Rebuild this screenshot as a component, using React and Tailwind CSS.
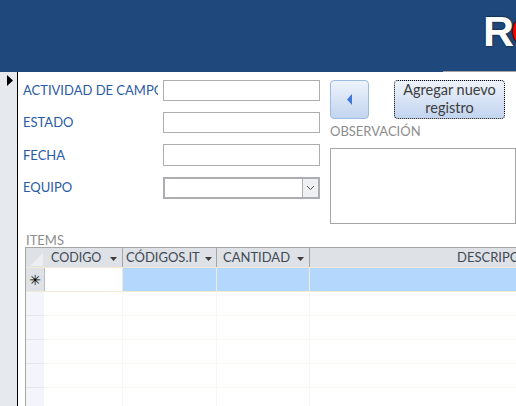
import React from 'react';

const FIELDS = [
  { label: 'ACTIVIDAD DE CAMPO', h: 'h-[21px]', mb: 'mb-[11px]', lh: 'leading-[21px]' },
  { label: 'ESTADO', h: 'h-[21px]', mb: 'mb-[11px]', lh: 'leading-[21px]' },
  { label: 'FECHA', h: 'h-[22px]', mb: 'mb-[11px]', lh: 'leading-[23px]' },
];

const COLUMNS = [
  { label: 'CODIGO', w: 'w-[79px]', pl: 'pl-[7px]', arrow: 'right-[5px]', text: 'text-[12.5px]' },
  { label: 'CÓDIGOS.IT', w: 'w-[94px]', pl: 'pl-[3px]', arrow: 'right-[4px]', text: 'text-[13px]' },
  { label: 'CANTIDAD', w: 'w-[93px]', pl: 'pl-[6px]', arrow: 'right-[5px]', text: 'text-[13px]' },
];

const Arrow = ({ className }) => (
  <svg width="7" height="4" viewBox="0 0 7 4" className={`absolute top-[9px] ${className}`}>
    <path d="M0 0h7L3.5 4z" fill="#3c3c3c" />
  </svg>
);

function Grid() {
  return (
    <div className="ml-[7px] w-[491px] border-t border-l border-[#a5a5a5]">
      {/* header */}
      <div className="flex h-[20px] bg-[#dee1e5] border-b border-[#f0ebd8]">
        <div className="w-[18px] shrink-0 flex items-end">
          <svg width="13" height="13" viewBox="0 0 13 13" className="ml-[4px] mb-[1px]">
            <path d="M13 0v13H0z" fill="#eceef1" />
          </svg>
        </div>
        {COLUMNS.map((c) => (
          <div key={c.label} className={`${c.w} shrink-0 relative border-r border-[#a5a5a5] ${c.pl} ${c.text} leading-[19px] text-[#3f4a57] whitespace-nowrap`}>
            {c.label}
            <Arrow className={c.arrow} />
          </div>
        ))}
        <div className="flex-1 min-w-0 overflow-hidden pl-[147px] text-[13px] leading-[19px] text-[#3f4a57] whitespace-nowrap">DESCRIPCIÓN</div>
      </div>
      {/* new record row */}
      <div className="flex h-[24px] border-b border-[#f0ebd8]">
        <div className="w-[18px] shrink-0 bg-[#dee1e5] flex items-center justify-center">
          <span className="text-[14px] leading-none text-black font-['DejaVu_Sans',sans-serif]">✳</span>
        </div>
        <div className="w-[79px] shrink-0 bg-white border-r border-[#f0ebd8] border-l border-l-[#b9bdc3]" />
        <div className="w-[94px] shrink-0 bg-[#b3d7fd] border-r border-[#f0ebd8]" />
        <div className="w-[93px] shrink-0 bg-[#b3d7fd] border-r border-[#f0ebd8]" />
        <div className="flex-1 bg-[#b3d7fd]" />
      </div>
      {/* empty rows */}
      {[0, 1, 2, 3, 4].map((i) => (
        <div key={i} className="flex h-[24px] border-b border-[#f7f6f0]">
          <div className="w-[18px] shrink-0 bg-[#f3f5fb] border-b border-[#e6e8ee] -mb-px" />
          <div className="w-[79px] shrink-0 border-r border-[#f7f6f0]" />
          <div className="w-[94px] shrink-0 border-r border-[#f7f6f0]" />
          <div className="w-[93px] shrink-0 border-r border-[#f7f6f0]" />
          <div className="flex-1" />
        </div>
      ))}
    </div>
  );
}

export default function App() {
  return (
    <div className="w-[516px] h-[406px] overflow-hidden bg-white font-['Lato',sans-serif] flex flex-col">
      {/* banner */}
      <div className="relative h-[72px] shrink-0 bg-[#1f497d] overflow-hidden">
        <div className="absolute left-[483px] top-[8px] whitespace-nowrap text-[43px] leading-[46px] font-black tracking-[-3px] font-['Liberation_Sans',sans-serif] text-white [text-shadow:0_0_2px_#000]">
          R<span className="text-[#ff0000]">O</span>
        </div>
        <div className="absolute right-0 bottom-0 w-[73px] h-px bg-[#a5a5a5]" />
      </div>

      <div className="flex flex-1 min-h-0">
        {/* record selector */}
        <div className="w-[18px] shrink-0 bg-[#e6e9ee] border-r border-black">
          <svg width="8" height="11" viewBox="0 0 8 11" className="ml-[6px] mt-[3px]">
            <path d="M1 0l6 5.5L1 11z" fill="#000" />
          </svg>
        </div>

        <div className="flex-1 min-w-0">
          <div className="flex h-[160px] pt-[8px]">
            {/* labels and fields */}
            <div className="w-[302px] shrink-0 pl-[5px]">
              {FIELDS.map((f) => (
                <div key={f.label} className={`flex ${f.mb}`}>
                  <div className={`w-[135px] shrink-0 overflow-hidden whitespace-nowrap text-[13px] text-[#2a5ba5] ${f.lh} ${f.h}`}>{f.label}</div>
                  <div className={`ml-[5px] w-[157px] border border-[#adadb2] bg-white ${f.h}`} />
                </div>
              ))}
              <div className="flex">
                <div className="w-[135px] shrink-0 text-[13px] leading-[20px] text-[#2a5ba5]">EQUIPO</div>
                <div className="ml-[5px] w-[157px] h-[22px] border-2 border-[#adadb2] bg-white flex justify-end">
                  <div className="w-[16px] bg-[#eef0f2] border-l border-[#adadb2] flex items-center justify-center">
                    <svg width="9" height="6" viewBox="0 0 9 6"><path d="M1 1l3.5 3.5L8 1" fill="none" stroke="#555" /></svg>
                  </div>
                </div>
              </div>
            </div>

            {/* buttons and notes */}
            <div className="flex-1 min-w-0 ml-[10px]">
              <div className="flex">
                <div className="w-[39px] h-[39px] rounded-[4px] border border-[#9cbbe3] bg-gradient-to-b from-[#eef3fb] to-[#c2d4ef] flex items-center justify-center">
                  <svg width="7" height="13" viewBox="0 0 7 13"><path d="M6 1v11L1 6.5z" fill="#3f78d6" /></svg>
                </div>
                <div className="ml-[25px] w-[111px] h-[39px] rounded-[4px] border border-dotted border-black bg-gradient-to-b from-[#eef3fb] to-[#c2d4ef] text-center text-[14.5px] leading-[18px] text-[#3b3b3b]">
                  Agregar nuevo<br />registro
                </div>
              </div>
              <div className="mt-[4px] h-[25px] text-[13px] leading-[17px] text-[#8d8d8d]">OBSERVACIÓN</div>
              <div className="w-[186px] h-[76px] border border-[#a5a5a5] bg-white" />
            </div>
          </div>

          <div className="ml-[8px] h-[15px] text-[13px] leading-[17px] text-[#8d8d8d]">ITEMS</div>
          <Grid />
        </div>
      </div>
    </div>
  );
}
